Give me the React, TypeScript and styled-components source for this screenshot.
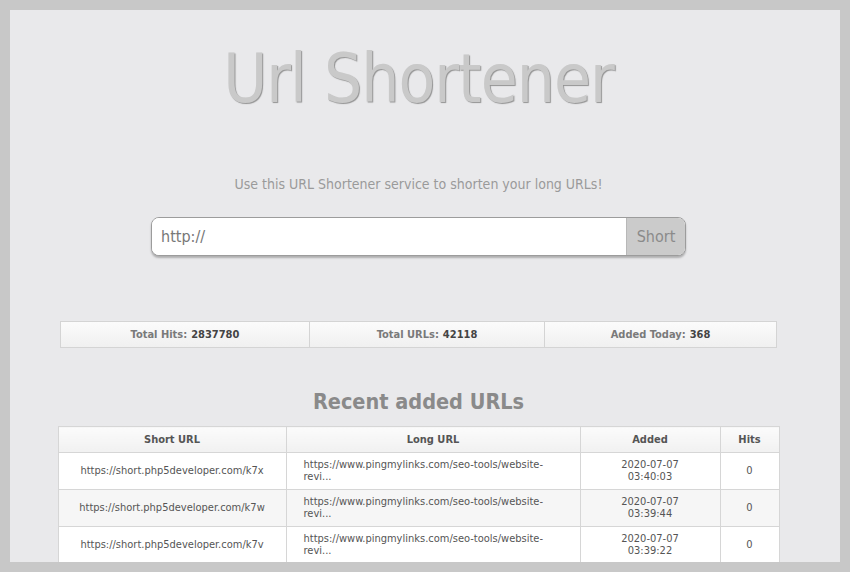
import React from "react";
import styled, { createGlobalStyle } from "styled-components";

const Global = createGlobalStyle`
  html, body { margin: 0; padding: 0; }
  body {
    background: #c8c8c8;
    font-family: "DejaVu Sans Condensed", "DejaVu Sans", sans-serif;
    font-stretch: condensed;
  }
`;

const Frame = styled.div`
  padding: 10px;
  height: 572px;
  box-sizing: border-box;
`;

const Panel = styled.div`
  background: #e9e9eb;
  height: 552px;
  overflow: hidden;
  padding: 0 63px 0 50px;
  box-sizing: border-box;
  display: flex;
  flex-direction: column;
  align-items: center;
`;

const Title = styled.h1`
  margin: 29px 0 0;
  font-family: "DejaVu Sans Condensed", "DejaVu Sans", sans-serif;
  font-stretch: condensed;
  font-weight: normal;
  font-size: 67px;
  line-height: 80px;
  color: #c9c9c9;
  text-shadow: 1px 1px 1px #939393;
  letter-spacing: -1px;
`;

const Subtitle = styled.p`
  margin: 56px 0 0;
  font-size: 14px;
  line-height: 18px;
  color: #9a9a9a;
`;

const Form = styled.form`
  margin-top: 24px;
  width: 535px;
  height: 39px;
  flex-shrink: 0;
  display: flex;
  border: 1px solid #9c9c9c;
  border-radius: 8px;
  box-sizing: border-box;
  overflow: hidden;
  box-shadow: 0 2px 2px rgba(0, 0, 0, 0.25);
  background: #fff;
`;

const Input = styled.input`
  flex: 1;
  border: none;
  outline: none;
  padding: 0 9px;
  font-family: inherit;
  font-stretch: condensed;
  font-size: 16px;
  color: #777;
  background: #fff;
  &::placeholder { color: #777; }
`;

const Button = styled.button`
  width: 59px;
  border: none;
  border-left: 1px solid #b8b8b8;
  background: #cbcbcb;
  color: #8a8a8a;
  font-family: inherit;
  font-stretch: condensed;
  font-size: 16px;
  padding: 0;
`;

const Stats = styled.div`
  margin-top: 65px;
  width: 717px;
  height: 27px;
  flex-shrink: 0;
  display: grid;
  grid-template-columns: 248px 235px 1fr;
  border: 1px solid #d4d4d4;
  box-sizing: border-box;
  background: linear-gradient(#fbfbfb, #f0f0f0);
`;

const Stat = styled.div`
  display: flex;
  align-items: center;
  justify-content: center;
  font-size: 11px;
  font-weight: bold;
  color: #7a7a7a;
  & + & { border-left: 1px solid #d4d4d4; }
  b { color: #444; margin-left: 4px; }
`;

const Heading = styled.h2`
  margin: 40px 0 0;
  font-size: 21.5px;
  line-height: 28px;
  font-weight: bold;
  color: #8a8a8a;
`;

const Table = styled.table`
  margin-top: 10px;
  width: 717px;
  flex-shrink: 0;
  border-collapse: collapse;
  table-layout: fixed;
  font-size: 11px;
  color: #555;
  background: #fff;
`;

const Th = styled.th<{ $w: number }>`
  width: ${(p) => p.$w}px;
  height: 25px;
  padding: 0;
  border: 1px solid #d6d6d6;
  background: linear-gradient(#fbfbfb, #f1f1f1);
  font-weight: bold;
  color: #555;
`;

const Row = styled.tr<{ $alt?: boolean }>`
  background: ${(p) => (p.$alt ? "#f6f6f6" : "#fff")};
`;

const Td = styled.td<{ $align?: string }>`
  height: 36px;
  padding: 0 17px;
  border: 1px solid #d6d6d6;
  text-align: ${(p) => p.$align || "center"};
  line-height: 12px;
  vertical-align: middle;
`;

const rows = [
  { s: "https://short.php5developer.com/k7x", d: "2020-07-07", t: "03:40:03" },
  { s: "https://short.php5developer.com/k7w", d: "2020-07-07", t: "03:39:44" },
  { s: "https://short.php5developer.com/k7v", d: "2020-07-07", t: "03:39:22" },
];

export default function App() {
  return (
    <Frame>
      <Global />
      <Panel>
        <Title>Url Shortener</Title>
        <Subtitle>Use this URL Shortener service to shorten your long URLs!</Subtitle>
        <Form onSubmit={(e) => e.preventDefault()}>
          <Input placeholder="http://" />
          <Button type="submit">Short</Button>
        </Form>
        <Stats>
          <Stat>Total Hits:<b>2837780</b></Stat>
          <Stat>Total URLs:<b>42118</b></Stat>
          <Stat>Added Today:<b>368</b></Stat>
        </Stats>
        <Heading>Recent added URLs</Heading>
        <Table>
          <thead>
            <tr>
              <Th $w={227}>Short URL</Th>
              <Th $w={293}>Long URL</Th>
              <Th $w={139}>Added</Th>
              <Th $w={58}>Hits</Th>
            </tr>
          </thead>
          <tbody>
            {rows.map((r, i) => (
              <Row key={r.s} $alt={i === 1}>
                <Td>{r.s}</Td>
                <Td $align="left">https://www.pingmylinks.com/seo-tools/website-revi...</Td>
                <Td>{r.d}<br />{r.t}</Td>
                <Td>0</Td>
              </Row>
            ))}
          </tbody>
        </Table>
      </Panel>
    </Frame>
  );
}
